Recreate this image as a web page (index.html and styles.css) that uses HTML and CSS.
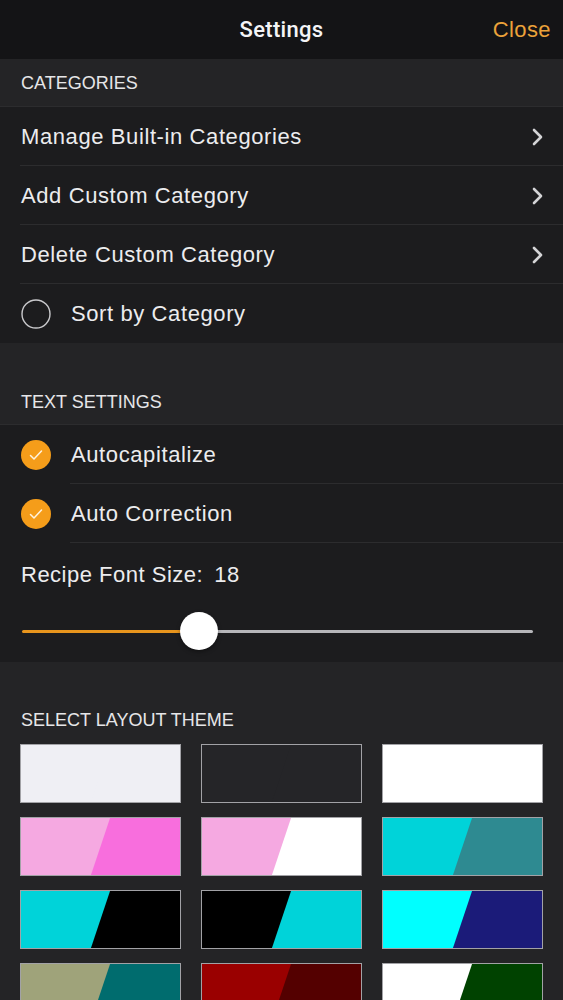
FILE: index.html
```html
<!DOCTYPE html>
<html lang="en">
<head>
<meta charset="utf-8">
<title>Settings</title>
<link rel="stylesheet" href="styles.css">
</head>
<body>
<div class="screen">
  <header class="navbar">
    <span></span>
    <h1 class="nav-title">Settings</h1>
    <span class="nav-close">Close</span>
  </header>

  <div class="section-title first">CATEGORIES</div>
  <ul class="group">
    <li class="row">
      <span class="row-label">Manage Built-in Categories</span>
      <svg class="chevron" viewBox="0 0 11 18" width="11" height="18"><path d="M2 2 L9 9 L2 16" fill="none" stroke="#d4d4d6" stroke-width="2.6" stroke-linecap="round" stroke-linejoin="round"/></svg>
    </li>
    <li class="row">
      <span class="row-label">Add Custom Category</span>
      <svg class="chevron" viewBox="0 0 11 18" width="11" height="18"><path d="M2 2 L9 9 L2 16" fill="none" stroke="#d4d4d6" stroke-width="2.6" stroke-linecap="round" stroke-linejoin="round"/></svg>
    </li>
    <li class="row">
      <span class="row-label">Delete Custom Category</span>
      <svg class="chevron" viewBox="0 0 11 18" width="11" height="18"><path d="M2 2 L9 9 L2 16" fill="none" stroke="#d4d4d6" stroke-width="2.6" stroke-linecap="round" stroke-linejoin="round"/></svg>
    </li>
    <li class="row check-row last">
      <svg class="check" viewBox="0 0 30 30" width="30" height="30"><circle cx="15" cy="15" r="14" fill="none" stroke="#c9c9cc" stroke-width="1.4"/></svg>
      <span class="row-label">Sort by Category</span>
    </li>
  </ul>

  <div class="section-title spaced">TEXT SETTINGS</div>
  <ul class="group">
    <li class="row check-row">
      <svg class="check" viewBox="0 0 30 30" width="30" height="30"><circle cx="15" cy="15" r="15" fill="#f59d1a"/><path d="M9.5 15.5 L13 19 L20.5 11" fill="none" stroke="#fff3df" stroke-width="1.5" stroke-linecap="round" stroke-linejoin="round"/></svg>
      <span class="row-label">Autocapitalize</span>
    </li>
    <li class="row check-row">
      <svg class="check" viewBox="0 0 30 30" width="30" height="30"><circle cx="15" cy="15" r="15" fill="#f59d1a"/><path d="M9.5 15.5 L13 19 L20.5 11" fill="none" stroke="#fff3df" stroke-width="1.5" stroke-linecap="round" stroke-linejoin="round"/></svg>
      <span class="row-label">Auto Correction</span>
    </li>
    <li class="slider-row">
      <div class="row-label">Recipe Font Size:<span class="value">18</span></div>
      <div class="slider">
        <div class="track-fill" style="width: 34.6%"></div>
        <div class="track-rest"></div>
        <div class="thumb" style="left: 34.6%"></div>
      </div>
    </li>
  </ul>

  <div class="section-title spaced last-title">SELECT LAYOUT THEME</div>
  <div class="themes">
    <div class="swatch" style="--a:#efeff4; --b:#efeff4"></div>
    <div class="swatch" style="--a:#252528; --b:#252528"></div>
    <div class="swatch" style="--a:#ffffff; --b:#ffffff"></div>
    <div class="swatch" style="--a:#f5a9e1; --b:#f86edd"></div>
    <div class="swatch" style="--a:#f5a9e1; --b:#ffffff"></div>
    <div class="swatch" style="--a:#00d3d9; --b:#2e8a91"></div>
    <div class="swatch" style="--a:#00d3d9; --b:#000000"></div>
    <div class="swatch" style="--a:#000000; --b:#00d3d9"></div>
    <div class="swatch" style="--a:#00ffff; --b:#1b1b79"></div>
    <div class="swatch" style="--a:#9fa37a; --b:#006c6e"></div>
    <div class="swatch" style="--a:#9a0000; --b:#540000"></div>
    <div class="swatch" style="--a:#ffffff; --b:#004200"></div>
  </div>
</div>
</body>
</html>
```

FILE: styles.css
```css
* {
  box-sizing: border-box;
}

html, body {
  margin: 0;
  padding: 0;
  background: #242426;
}

body {
  font-family: "Liberation Sans", Arial, sans-serif;
  color: #ececee;
}

.screen {
  width: 563px;
  height: 1000px;
  overflow: hidden;
  background: #242426;
}

.navbar {
  height: 59px;
  background: #141416;
  display: grid;
  grid-template-columns: 1fr auto 1fr;
  align-items: center;
  padding: 0 12px 0 12px;
}

.nav-title {
  margin: 0;
  font-family: Roboto, "Liberation Sans", sans-serif;
  font-weight: 500;
  font-size: 22px;
  letter-spacing: 0.3px;
  color: #f4f4f6;
  line-height: 22px;
}

.nav-close {
  justify-self: end;
  font-size: 22px;
  line-height: 22px;
  letter-spacing: 0.4px;
  color: #eba23a;
}

.section-title {
  font-size: 18px;
  line-height: 22px;
  color: #e6e6e8;
  padding: 13px 21px 12px;
  background: #242426;
}

.section-title.spaced {
  padding-top: 48px;
  padding-bottom: 11px;
}

.section-title.last-title {
  padding-top: 47px;
  padding-bottom: 13px;
}

.group {
  list-style: none;
  margin: 0;
  padding: 0;
  background: #1c1c1e;
  border-top: 1px solid #2c2c2e;
}

.row {
  height: 59px;
  display: flex;
  align-items: center;
  padding: 0 21px;
  position: relative;
}

.row::after {
  content: "";
  position: absolute;
  left: 20px;
  right: 0;
  bottom: 0;
  height: 1px;
  background: #2c2c2e;
}

.row.last::after {
  display: none;
}

.check-row::after {
  left: 70px;
}

.row-label {
  font-size: 22px;
  line-height: 22px;
  letter-spacing: 0.6px;
  color: #ececee;
  flex: 1;
}

.chevron {
  margin-right: -1px;
  flex: none;
}

.check {
  flex: none;
  margin-right: 20px;
  margin-left: 0;
}

.slider-row {
  padding: 21px 21px 12px 21px;
}

.slider-row .row-label {
  letter-spacing: 0.5px;
}

.value {
  margin-left: 11px;
}

.slider {
  position: relative;
  height: 38px;
  margin: 26px 9px 0 1px;
  display: flex;
  align-items: center;
}

.track-fill {
  height: 3px;
  background: #e8951d;
  border-radius: 2px 0 0 2px;
}

.track-rest {
  flex: 1;
  height: 3px;
  background: #b6b6ba;
  border-radius: 0 2px 2px 0;
}

.thumb {
  position: absolute;
  top: 0;
  width: 38px;
  height: 38px;
  margin-left: -19px;
  border-radius: 50%;
  background: #ffffff;
  box-shadow: 0 2px 4px rgba(0, 0, 0, 0.35);
}

.themes {
  display: grid;
  grid-template-columns: repeat(3, 1fr);
  column-gap: 20px;
  row-gap: 14px;
  padding: 0 20px;
}

.swatch {
  height: 59px;
  border: 1px solid #a2a2a6;
  background: var(--b);
  position: relative;
  overflow: hidden;
}

.swatch::before {
  content: "";
  position: absolute;
  inset: 0;
  background: var(--a);
  clip-path: polygon(0 0, 56% 0, 44% 100%, 0 100%);
}
```
